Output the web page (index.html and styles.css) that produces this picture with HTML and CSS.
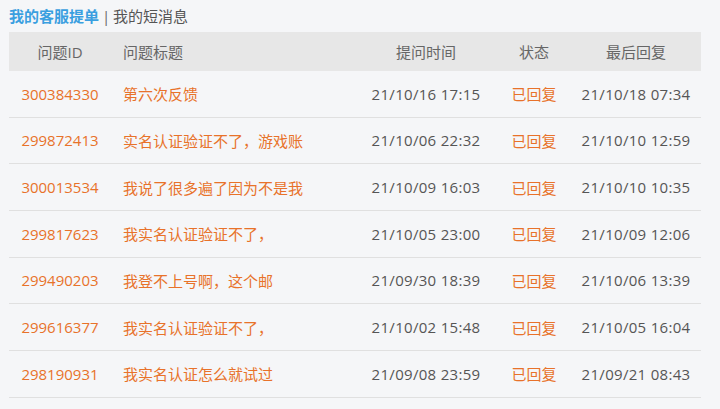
FILE: index.html
```html
<!DOCTYPE html>
<html lang="zh-CN">
<head>
  <meta charset="UTF-8" />
  <title>我的客服提单</title>
  <link rel="stylesheet" href="styles.css">
</head>
<body>

<div class="tabs">
  <span class="tab-active">我的客服提单</span>
  <span class="sep">|</span>
  <span class="tab">我的短消息</span>
</div>

<table class="tickets">
  <colgroup>
    <col class="c-id">
    <col class="c-title">
    <col class="c-time">
    <col class="c-status">
    <col class="c-last">
  </colgroup>
  <thead>
    <tr>
      <th class="center">问题ID</th>
      <th class="left">问题标题</th>
      <th class="center">提问时间</th>
      <th class="center">状态</th>
      <th class="center">最后回复</th>
    </tr>
  </thead>
  <tbody>
    <tr>
      <td class="center orange">300384330</td>
      <td class="left orange">第六次反馈</td>
      <td class="center time">21/10/16 17:15</td>
      <td class="center orange">已回复</td>
      <td class="center time">21/10/18 07:34</td>
    </tr>
    <tr>
      <td class="center orange">299872413</td>
      <td class="left orange">实名认证验证不了，游戏账</td>
      <td class="center time">21/10/06 22:32</td>
      <td class="center orange">已回复</td>
      <td class="center time">21/10/10 12:59</td>
    </tr>
    <tr>
      <td class="center orange">300013534</td>
      <td class="left orange">我说了很多遍了因为不是我</td>
      <td class="center time">21/10/09 16:03</td>
      <td class="center orange">已回复</td>
      <td class="center time">21/10/10 10:35</td>
    </tr>
    <tr>
      <td class="center orange">299817623</td>
      <td class="left orange">我实名认证验证不了，</td>
      <td class="center time">21/10/05 23:00</td>
      <td class="center orange">已回复</td>
      <td class="center time">21/10/09 12:06</td>
    </tr>
    <tr>
      <td class="center orange">299490203</td>
      <td class="left orange">我登不上号啊，这个邮</td>
      <td class="center time">21/09/30 18:39</td>
      <td class="center orange">已回复</td>
      <td class="center time">21/10/06 13:39</td>
    </tr>
    <tr>
      <td class="center orange">299616377</td>
      <td class="left orange">我实名认证验证不了，</td>
      <td class="center time">21/10/02 15:48</td>
      <td class="center orange">已回复</td>
      <td class="center time">21/10/05 16:04</td>
    </tr>
    <tr>
      <td class="center orange">298190931</td>
      <td class="left orange">我实名认证怎么就试过</td>
      <td class="center time">21/09/08 23:59</td>
      <td class="center orange">已回复</td>
      <td class="center time">21/09/21 08:43</td>
    </tr>
  </tbody>
</table>

</body>
</html>
```

FILE: styles.css
```css
body {
  font-family: "Open Sans", "Noto Sans CJK SC", sans-serif;
  background: #f5f6f8;
  margin: 0;
  padding: 0 19px 0 9px;
  color: #555;
}
.tabs {
  height: 32px;
  line-height: 32px;
  font-size: 15px;
  color: #555;
}
.tab-active {
  color: #3a9fe0;
  font-weight: bold;
}
.sep {
  color: #666;
  margin: 0 -1px;
}
.tickets {
  width: 692px;
  border-collapse: collapse;
  table-layout: fixed;
  font-size: 15px;
}
.c-id { width: 102px; }
.c-title { width: 254px; }
.c-time { width: 122px; }
.c-status { width: 94px; }
.c-last { width: 120px; }
.tickets th {
  background: #e7e7e7;
  color: #666;
  font-weight: normal;
  height: 39px;
  padding: 0;
}
.tickets td {
  height: 45.67px;
  padding: 0;
  border-bottom: 1px solid #e0e0e0;
  color: #555;
  white-space: nowrap;
}
.center { text-align: center; }
.left { text-align: left; padding-left: 12px !important; }
.tickets th:last-child, .tickets td:last-child { padding-right: 10px; }
.tickets td.time { letter-spacing: 0.3px; }
.tickets td.orange { color: #e8722a; }
```
